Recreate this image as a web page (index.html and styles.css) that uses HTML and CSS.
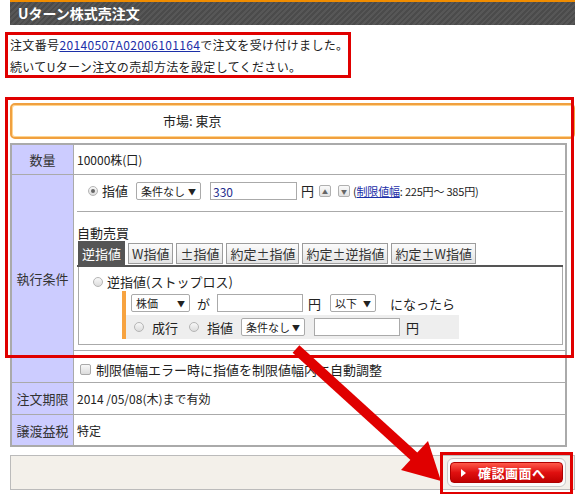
FILE: index.html
```html
<!DOCTYPE html>
<html lang="ja">
<head>
<meta charset="utf-8">
<title>Uターン株式売注文</title>
<link rel="stylesheet" href="styles.css">
</head>
<body>
<div class="page">
  <div class="title-bar"><h1>Uターン株式売注文</h1></div>

  <p class="msg">注文番号<a href="#" class="link">20140507A02006101164</a>で注文を受け付けました。<br>続いてUターン注文の売却方法を設定してください。</p>

  <div class="market">市場: 東京</div>

  <div class="form">
    <div class="th r1">数量</div>
    <div class="td r1">10000株(口)</div>

    <div class="th exec-th">執行条件</div>
    <div class="td exec">
      <div class="price-line">
        <span class="radio checked"></span>
        <span class="lbl">指値</span>
        <span class="sel w65">条件なし</span>
        <input class="txt w87 blue" type="text" value="330">
        <span class="yen">円</span>
        <span class="spin">▲</span>
        <span class="spin">▼</span>
        <span class="range">(<a href="#" class="link">制限値幅</a>: 225円～ 385円)</span>
      </div>
      <div class="auto-title">自動売買</div>
      <div class="tabs">
        <span class="tab active">逆指値</span>
        <span class="tab">W指値</span>
        <span class="tab">±指値</span>
        <span class="tab">約定±指値</span>
        <span class="tab">約定±逆指値</span>
        <span class="tab">約定±W指値</span>
      </div>
      <div class="tab-body">
        <div class="stop-line"><span class="radio"></span><span class="lbl">逆指値(ストップロス)</span></div>
        <div class="cond">
          <div class="cond-row">
            <span class="sel w59">株価</span>
            <span class="ga">が</span>
            <input class="txt w86" type="text" value="">
            <span class="yen2">円</span>
            <span class="sel w46">以下</span>
            <span class="then">になったら</span>
          </div>
          <div class="cond-row gray">
            <span class="radio"></span><span class="lbl2">成行</span>
            <span class="radio"></span><span class="lbl3">指値</span>
            <span class="sel w64">条件なし</span>
            <input class="txt w86" type="text" value="">
            <span class="yen3">円</span>
          </div>
        </div>
      </div>
    </div>
    <div class="td adjust"><span class="check"></span>制限値幅エラー時に指値を制限値幅内に自動調整</div>

    <div class="th r3">注文期限</div>
    <div class="td r3">2014 /05/08(木)まで有効</div>

    <div class="th r4 last">譲渡益税</div>
    <div class="td r4 last">特定</div>
  </div>

  <div class="footer-bar">
    <span class="btn-wrap"><a href="#" class="btn"><span class="play"></span>確認画面へ</a></span>
  </div>
</div>

<div class="mark mark-msg"></div>
<div class="mark mark-form"></div>
<div class="mark mark-btn"></div>
<svg class="arrow" width="580" height="494" viewBox="0 0 580 494">
  <line x1="296" y1="349" x2="418" y2="460" stroke="#e00000" stroke-width="10"/>
  <polygon points="441,481 401,470 428,441" fill="#e00000"/>
</svg>
</body>
</html>
```

FILE: styles.css
```css
html, body {
  margin: 0;
  padding: 0;
  background: #fff;
}
body {
  font-family: "Noto Sans CJK JP", "Noto Sans", sans-serif;
  color: #333;
  font-size: 12px;
  position: relative;
  width: 580px;
  height: 494px;
  overflow: hidden;
}
.page {
  padding-left: 10px;
  width: 565px;
}
.title-bar {
  border-top: 2px solid #f08c00;
  height: 23px;
  background: repeating-linear-gradient(135deg, #575757 0 2px, #4b4b4b 2px 4px);
}
.title-bar h1 {
  margin: 0;
  padding-left: 8px;
  font-size: 14px;
  font-weight: bold;
  line-height: 23px;
  color: #fff;
}
.msg {
  margin: 9px 0 0;
  font-size: 12px;
  line-height: 22px;
  letter-spacing: 0.35px;
  color: #222;
}
.link {
  color: #1c2fa8;
  text-decoration: underline;
}
.market {
  margin-top: 25px;
  height: 32px;
  border: 2px solid #f0a040;
  border-radius: 5px;
  box-shadow: inset 0 0 0 1px #ffd590;
  padding-left: 151px;
  line-height: 32px;
  font-size: 13px;
  color: #222;
}

/* form grid */
.form {
  margin-top: 4px;
  width: 557px;
  box-sizing: border-box;
  border: 2px solid #aaa;
  display: grid;
  grid-template-columns: 62px 1fr;
}
.th {
  background: #ccccff;
  border-right: 1px solid #aaa;
  border-bottom: 1px solid #aaa;
  font-size: 13px;
  color: #333;
  display: flex;
  align-items: center;
  justify-content: center;
}
.td {
  border-bottom: 1px solid #aaa;
  padding-left: 3px;
  font-size: 12px;
  color: #222;
  display: flex;
  align-items: center;
}
.last { border-bottom: none; }
.r1 { height: 29px; }
.r3 { height: 31px; }
.r4 { height: 30px; }
.exec-th { grid-row: span 2; }
.exec {
  display: block;
  padding: 0 2px 5px 3px;
  height: 170px;
}
.price-line {
  height: 29px;
  padding-top: 7px;
  display: flex;
  align-items: flex-start;
  padding-left: 11px;
  border-bottom: 1px solid #aaa;
}
.price-line > * { margin-top: 0; }
.price-line .radio { margin-top: 4px; }
.price-line .lbl, .price-line .yen, .price-line .range { line-height: 18px; }
.price-line .spin { margin-top: 3px; }
.radio {
  display: inline-block;
  width: 10px;
  height: 10px;
  border-radius: 50%;
  border: 1px solid #b5b5b5;
  background: linear-gradient(#f8f8f8, #dcdcdc);
  box-sizing: border-box;
  position: relative;
  flex: none;
}
.radio.checked::after {
  content: "";
  position: absolute;
  left: 2px;
  top: 2px;
  width: 4px;
  height: 4px;
  border-radius: 50%;
  background: #666;
}
.lbl {
  margin-left: 4px;
  font-size: 13px;
}
.price-line .lbl {
  margin-right: 8px;
}
.sel {
  display: inline-flex;
  align-items: center;
  justify-content: space-between;
  height: 18px;
  border: 1px solid #aaa;
  border-radius: 2px;
  padding: 0 4px;
  box-sizing: border-box;
  background: #fff;
  font-size: 11px;
  white-space: nowrap;
  color: #222;
  flex: none;
}
.sel::after {
  content: "▼";
  font-size: 8px;
  color: #222;
}
.w65 { width: 65px; }
.w59 { width: 59px; }
.w46 { width: 46px; }
.w64 { width: 64px; }
.txt {
  height: 18px;
  border: 1px solid #aaa;
  box-sizing: border-box;
  padding: 0 2px;
  margin: 0;
  font-family: "Noto Sans CJK JP", "Noto Sans", sans-serif;
  font-size: 12px;
  color: #222;
  outline: none;
  flex: none;
}
.w87 { width: 87px; }
.w86 { width: 86px; }
.blue { color: #1e2c8c; }
.price-line .sel { margin-right: 9px; }
.yen {
  margin-left: 4px;
  font-size: 13px;
}
.spin {
  display: inline-flex;
  align-items: center;
  justify-content: center;
  width: 12px;
  height: 12px;
  border: 1px solid #b0b0b0;
  border-radius: 2px;
  box-sizing: border-box;
  background: linear-gradient(#fafafa, #e2e2e2);
  font-size: 6px;
  color: #666;
  margin-left: 5px;
}
.spin + .spin { margin-left: 7px; }
.range {
  margin-left: 3px;
  font-size: 11px;
  letter-spacing: -0.2px;
}
.auto-title {
  padding-top: 12px;
  line-height: 17px;
  font-size: 13px;
}
.tabs {
  display: flex;
  align-items: flex-end;
  gap: 3px;
  padding-left: 1px;
  border-bottom: 2px solid #555;
}
.tab {
  height: 21px;
  margin-bottom: 1px;
  border: 1px solid #9c9c9c;
  box-sizing: border-box;
  background: linear-gradient(#fbfbfb, #e4e4e4);
  padding: 0 3px;
  font-size: 13px;
  line-height: 19px;
  color: #333;
}
.tab.active {
  height: 24px;
  margin-bottom: 0;
  border-color: #555;
  background: #555;
  color: #fff;
  line-height: 23px;
}
.tab-body {
  margin-left: 1px;
  border: 1px solid #aaa;
  border-top: none;
  padding: 6px 0 5px 14px;
}
.stop-line {
  display: flex;
  align-items: center;
  height: 17px;
}
.cond {
  margin: 1px 0 0 29px;
  width: 333px;
  border-left: 4px solid #f7a340;
}
.cond-row {
  height: 24px;
  display: flex;
  align-items: center;
  padding-left: 5px;
  font-size: 13px;
}
.cond-row.gray {
  background: #eeeeee;
  padding-left: 8px;
}
.ga { margin: 0 7px; }
.yen2 { margin: 0 9px 0 5px; }
.then { margin-left: 14px; }
.lbl2 { margin: 0 11px 0 8px; }
.lbl3 { margin: 0 8px; }
.cond-row.gray .sel { margin-right: 9px; }
.yen3 { margin-left: 6px; }
.adjust {
  height: 31px;
  padding-left: 6px;
  padding-top: 6px;
  box-sizing: border-box;
  height: 32px;
  font-size: 13px;
}
.check {
  display: inline-block;
  width: 11px;
  height: 11px;
  border: 1px solid #aaa;
  border-radius: 2px;
  box-sizing: border-box;
  background: linear-gradient(#f8f8f8, #dcdcdc);
  margin-right: 5px;
  flex: none;
}
.footer-bar {
  margin-top: 8px;
  height: 33px;
  border: 1px solid #bbb;
  background: #f3f0ea;
  display: flex;
  align-items: center;
  justify-content: flex-end;
  padding-right: 8px;
}
.btn-wrap {
  display: inline-flex;
  padding: 3px 2px;
  border: 1px solid #c8c8c8;
  border-radius: 6px;
  background: #fbfbfb;
}
.btn {
  display: flex;
  align-items: center;
  width: 113px;
  height: 21px;
  box-sizing: border-box;
  border-radius: 4px;
  border: 1px solid #b00000;
  background: linear-gradient(#ff5a4a, #e01010 50%, #c00000);
  color: #fff;
  font-weight: bold;
  font-size: 13px;
  text-decoration: none;
  padding-left: 10px;
  letter-spacing: 0.5px;
}
.play {
  width: 0;
  height: 0;
  border-left: 5px solid #fff;
  border-top: 4px solid transparent;
  border-bottom: 4px solid transparent;
  margin-right: 12px;
}
.mark {
  position: absolute;
  border: 3px solid #e00000;
  box-sizing: border-box;
  pointer-events: none;
}
.mark-msg { left: 5px; top: 32px; width: 346px; height: 46px; }
.mark-form { left: 5px; top: 97px; width: 569px; height: 261px; }
.mark-btn { left: 440px; top: 452px; width: 133px; height: 43px; }
.arrow {
  position: absolute;
  left: 0;
  top: 0;
  pointer-events: none;
}
```
